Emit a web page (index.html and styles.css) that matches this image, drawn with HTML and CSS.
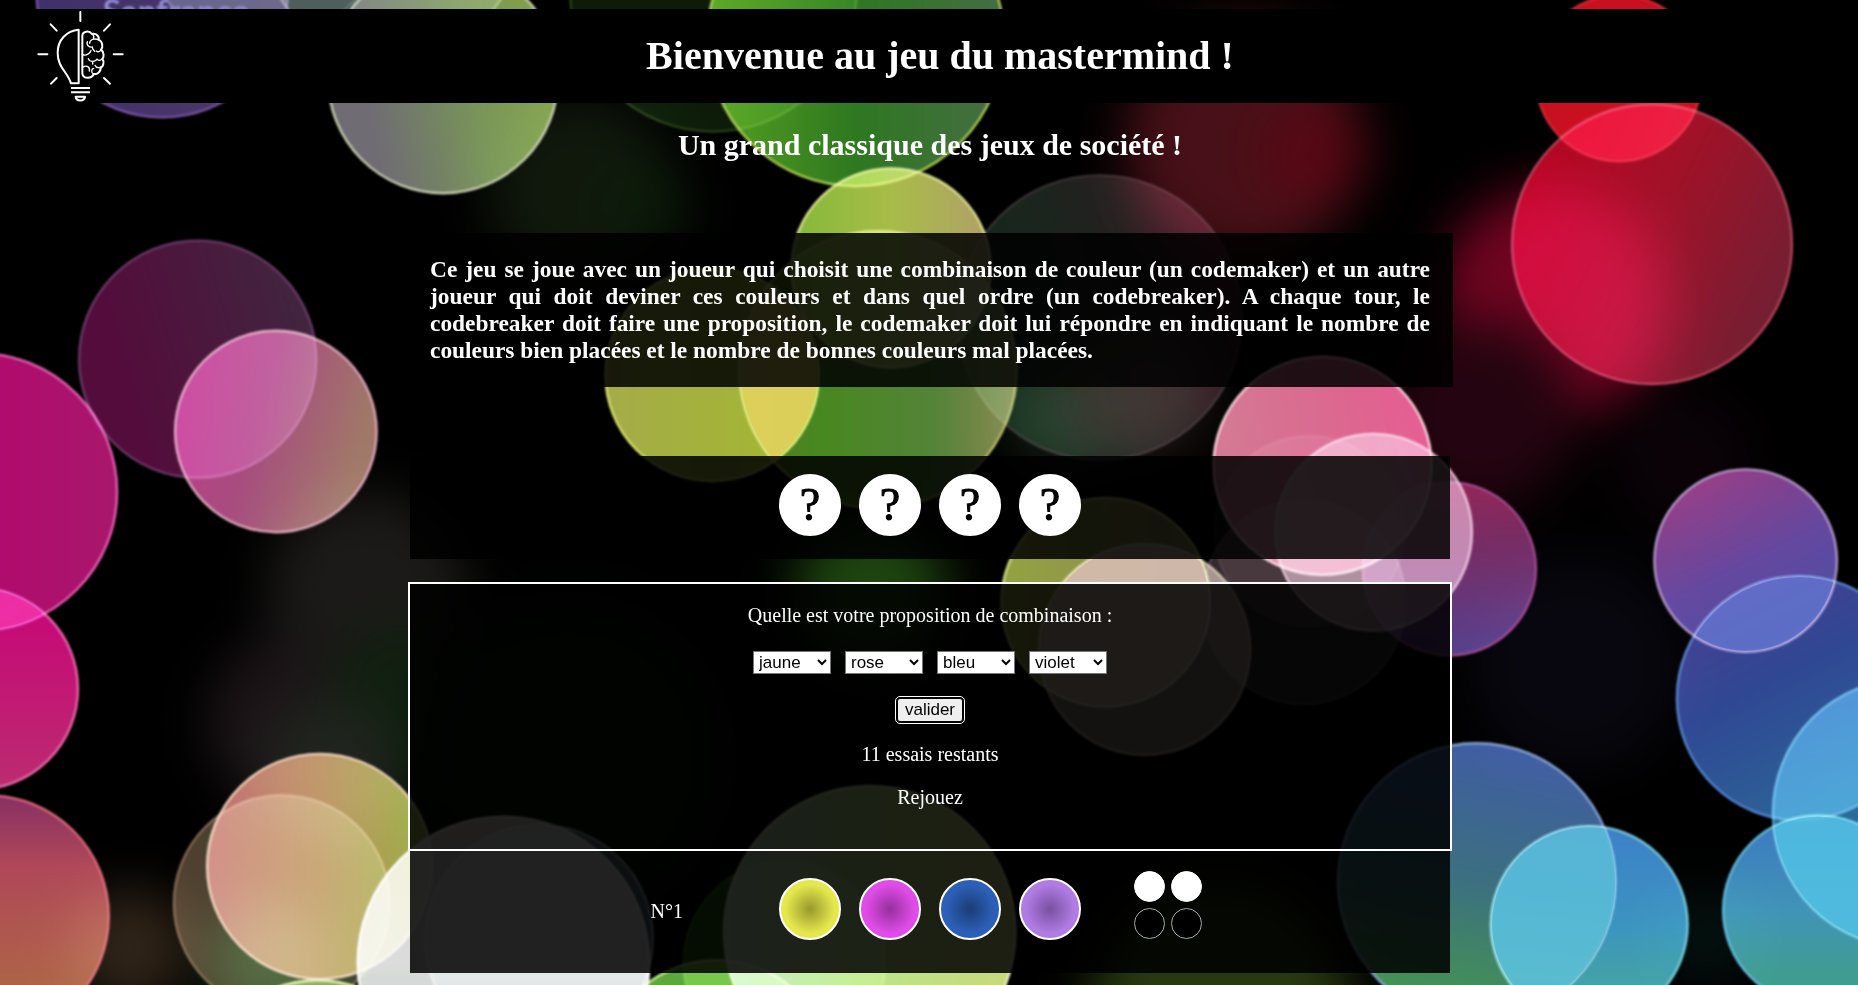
FILE: index.html
```html
<!DOCTYPE html>
<html lang="fr">
<head>
<meta charset="utf-8">
<title>Mastermind</title>
<link rel="stylesheet" href="styles.css">
</head>
<body>
<svg class="bokeh" viewBox="0 0 1568 831" preserveAspectRatio="xMidYMid slice" aria-hidden="true">
  <defs>
    <filter id="soft" x="-50%" y="-50%" width="200%" height="200%" color-interpolation-filters="sRGB"><feGaussianBlur stdDeviation="22"/></filter>
    <linearGradient id="g1" x1="0" x2="1"><stop offset="0" stop-color="#40306c"/><stop offset="1" stop-color="#4c3a66"/></linearGradient>
    <linearGradient id="g2" x1="0" x2="1" y2="-.2"><stop offset=".05" stop-color="#706c74"/><stop offset=".5" stop-color="#789458"/><stop offset=".9" stop-color="#84a348"/></linearGradient>
    <linearGradient id="g3" x1="0" x2="1"><stop offset="0" stop-color="#56a020"/><stop offset=".5" stop-color="#2e7820"/><stop offset="1" stop-color="#466c44"/></linearGradient>
    <linearGradient id="g4" x1="0" x2="1"><stop offset="0" stop-color="#84ba38"/><stop offset=".5" stop-color="#a8bc48"/><stop offset="1" stop-color="#b0a068"/></linearGradient>
    <linearGradient id="g5" x1="0" x2="1" y2="-.3"><stop offset="0" stop-color="#14281c"/><stop offset=".5" stop-color="#242020"/><stop offset="1" stop-color="#4c1028"/></linearGradient>
    <linearGradient id="g6" x1="0" x2="1" y1=".2" y2=".7"><stop offset="0" stop-color="#b80420"/><stop offset=".5" stop-color="#a01228"/><stop offset="1" stop-color="#702034"/></linearGradient>
    <linearGradient id="g8" x1="0" x2="1" y2="-.3"><stop offset="0" stop-color="#540c3c"/><stop offset="1" stop-color="#3c2c40"/></linearGradient>
    <linearGradient id="g9" x1="0" x2="1" y2=".3"><stop offset="0" stop-color="#bc3c88"/><stop offset=".5" stop-color="#a84c80"/><stop offset="1" stop-color="#a07868"/></linearGradient>
    <linearGradient id="g10" x1="0" x2="1"><stop offset=".2" stop-color="#b80070"/><stop offset="1" stop-color="#a8186c"/></linearGradient>
    <linearGradient id="g11" x1="0" x2="0" y2="1"><stop offset="0" stop-color="#c80478"/><stop offset="1" stop-color="#bc2c70"/></linearGradient>
    <linearGradient id="g12" x1="0" x2="0" y2="1"><stop offset="0" stop-color="#883064"/><stop offset=".3" stop-color="#b04858"/><stop offset="1" stop-color="#ac7040"/></linearGradient>
    <linearGradient id="g13" x1="0" x2="1"><stop offset="0" stop-color="#c06c70"/><stop offset=".5" stop-color="#b88858"/><stop offset="1" stop-color="#9cb448"/></linearGradient>
    <linearGradient id="g14" x1="0" x2="1"><stop offset="0" stop-color="#504030"/><stop offset="1" stop-color="#34442c"/></linearGradient>
    <linearGradient id="g15" x1="0" x2="0" y2="1"><stop offset="0" stop-color="#d8d0cc"/><stop offset=".5" stop-color="#dcdcdc"/><stop offset="1" stop-color="#a8cca8"/></linearGradient>
    <linearGradient id="g17" x1="0" x2="1"><stop offset="0" stop-color="#b8e4c0"/><stop offset=".5" stop-color="#bce48c"/><stop offset="1" stop-color="#c8d87c"/></linearGradient>
    <linearGradient id="g19" x1="0" x2="1"><stop offset="0" stop-color="#a4ac48"/><stop offset="1" stop-color="#a4b830"/></linearGradient>
    <linearGradient id="g20" x1="0" x2="1"><stop offset=".1" stop-color="#508020"/><stop offset=".3" stop-color="#488820"/><stop offset=".7" stop-color="#548438"/><stop offset="1" stop-color="#888850"/></linearGradient>
    <linearGradient id="g21" x1="0" x2="1" y2="-.2"><stop offset="0" stop-color="#d47894"/><stop offset="1" stop-color="#e4588c"/></linearGradient>
    <linearGradient id="g23" x1="0" x2="0" y2="1"><stop offset="0" stop-color="#842450"/><stop offset=".5" stop-color="#70306c"/><stop offset="1" stop-color="#54408c"/></linearGradient>
    <linearGradient id="g25" x1="0" x2="1"><stop offset="0" stop-color="#94a440"/><stop offset="1" stop-color="#8c8058"/></linearGradient>
    <linearGradient id="g27" x1=".2" x2=".7" y2="1"><stop offset="0" stop-color="#983c80"/><stop offset=".55" stop-color="#6448a0"/><stop offset="1" stop-color="#4850a0"/></linearGradient>
    <linearGradient id="g28" x1="0" x2=".5" y2="1"><stop offset="0" stop-color="#4c3c90"/><stop offset=".5" stop-color="#304894"/><stop offset="1" stop-color="#2c6498"/></linearGradient>
    <linearGradient id="g29" x1="0" x2="0" y2="1"><stop offset="0" stop-color="#2c64a4"/><stop offset="1" stop-color="#247490"/></linearGradient>
    <linearGradient id="g30" x1="0" x2="0" y2="1"><stop offset="0" stop-color="#3c78c0"/><stop offset=".5" stop-color="#4094b8"/><stop offset="1" stop-color="#40a080"/></linearGradient>
    <linearGradient id="g31" x1=".6" x2=".4" y2="1"><stop offset="0" stop-color="#405ca4"/><stop offset=".5" stop-color="#3c7080"/><stop offset=".9" stop-color="#449058"/></linearGradient>
    <linearGradient id="g32" x1="0" x2="0" y2="1"><stop offset="0" stop-color="#3c80c8"/><stop offset=".5" stop-color="#3c94c0"/><stop offset="1" stop-color="#48ac94"/></linearGradient>
    <clipPath id="c32"><circle cx="1341" cy="780" r="82"/></clipPath>
    <clipPath id="c30"><circle cx="1534" cy="768" r="79"/></clipPath>
    <clipPath id="c28"><circle cx="1518" cy="589" r="102"/></clipPath>
    <clipPath id="c20"><circle cx="741" cy="312" r="116"/></clipPath>
    <clipPath id="c11"><circle cx="-19" cy="581" r="84"/></clipPath>
    <clipPath id="c26"><circle cx="966" cy="548" r="88"/></clipPath>
  </defs>
  <rect width="1568" height="831" fill="#000"/>
  <g filter="url(#soft)">
    <circle cx="1050" cy="120" r="100" fill="#481018"/>
    <circle cx="1110" cy="130" r="44" fill="#580814"/>
    <circle cx="1310" cy="256" r="98" fill="#700420"/>
    <circle cx="1250" cy="350" r="80" fill="#240410"/>
    <circle cx="490" cy="160" r="80" fill="#10180c"/>
    <circle cx="545" cy="175" r="36" fill="#0c1c0a"/>
    <circle cx="735" cy="500" r="64" fill="#1e4410"/>
    <circle cx="310" cy="500" r="85" fill="#1b1a18"/>
    <circle cx="250" cy="610" r="75" fill="#1c1418"/>
    <circle cx="340" cy="600" r="70" fill="#10200f"/>
    <circle cx="280" cy="650" r="60" fill="#20241e"/>
    <circle cx="110" cy="800" r="50" fill="#302418"/>
    <circle cx="230" cy="810" r="50" fill="#183c1c"/>
    <circle cx="480" cy="640" r="130" fill="#041806"/>
    <circle cx="900" cy="350" r="50" fill="#142014"/>
    <circle cx="960" cy="330" r="60" fill="#241818"/>
    <circle cx="1330" cy="560" r="90" fill="#08070f"/>
    <circle cx="1420" cy="390" r="60" fill="#0a0207"/>
    <circle cx="1030" cy="850" r="110" fill="#283810"/>
    <circle cx="1440" cy="790" r="40" fill="#041210"/>
  </g>
  <g class="discs">
    <circle cx="137" cy="-7" r="106" fill="url(#g1)" stroke="#7850a0"/>
    <circle cx="220" cy="-70" r="106" fill="#303c40" stroke="#506070"/>
    <circle cx="374" cy="66" r="97" fill="url(#g2)" stroke="#c4ccb0"/>
    <circle cx="330" cy="-60" r="110" fill="#242c24" stroke="#607058"/>
    <circle cx="602" cy="-10" r="121" fill="#0c1c08" stroke="#284018"/>
    <circle cx="722" cy="32" r="125" fill="url(#g3)" stroke="#a8c850"/>
    <circle cx="752" cy="226" r="84" fill="url(#g4)" stroke="#dce090"/>
    <circle cx="928" cy="268" r="120" fill="url(#g5)" stroke="#383034"/>
    <circle cx="1394" cy="206" r="118" fill="url(#g6)" stroke="#b04458"/>
    <circle cx="1366" cy="66" r="70" fill="#c81020" stroke="#d02830"/>
    <circle cx="167" cy="303" r="100" fill="url(#g8)" stroke="#683864"/>
    <circle cx="233" cy="364" r="85" fill="url(#g9)" stroke="#dca4b8"/>
    <circle cx="-18" cy="415" r="117" fill="url(#g10)" stroke="#e460b0"/>
    <circle cx="-19" cy="581" r="85" fill="url(#g11)" stroke="#e868a8"/>
    <circle cx="-10" cy="773" r="102" fill="url(#g12)" stroke="#dc6878"/>
    <circle cx="270" cy="731" r="95" fill="url(#g13)" stroke="#ecc8b0"/>
    <circle cx="238" cy="762" r="91" fill="url(#g14)" stroke="#806450"/>
    <circle cx="425" cy="812" r="123" fill="url(#g15)" stroke="#fff"/>
    <circle cx="455" cy="792" r="96" fill="#506070" stroke="#b0b0b0"/>
    <circle cx="268" cy="924" r="97" fill="#688048" stroke="#e0e8a0"/>
    <circle cx="662" cy="812" r="85" fill="#285c14" stroke="#3c7020"/>
    <circle cx="605" cy="907" r="97" fill="#5ca83c" stroke="#c0f090"/>
    <circle cx="734" cy="786" r="123" fill="url(#g17)" stroke="#ecf4cc"/>
    <circle cx="601" cy="316" r="90" fill="url(#g19)" stroke="#d8e070"/>
    <circle cx="741" cy="312" r="117" fill="url(#g20)" stroke="#b8b868"/>
    <circle cx="1116" cy="393" r="92" fill="url(#g21)" stroke="#fcd4dc"/>
    <circle cx="1159" cy="449" r="83" fill="#907080" stroke="#dcb4c4"/>
    <circle cx="1105" cy="448" r="80" fill="#181214" stroke="#241c20"/>
    <circle cx="1100" cy="508" r="86" fill="#342a2e" stroke="#4c4044"/>
    <circle cx="1223" cy="480" r="73" fill="url(#g23)" stroke="#a04890"/>
    <circle cx="933" cy="508" r="88" fill="url(#g25)" stroke="#ccd880"/>
    <circle cx="966" cy="548" r="89" fill="#908078" stroke="#c8b8a0"/>
    <circle cx="1473" cy="473" r="77" fill="url(#g27)" stroke="#b094c8"/>
    <circle cx="1518" cy="589" r="103" fill="url(#g28)" stroke="#5484d0"/>
    <circle cx="1609" cy="686" r="113" fill="url(#g29)" stroke="#50a0d0"/>
    <circle cx="1534" cy="768" r="80" fill="url(#g30)" stroke="#60b8dc"/>
    <circle cx="1246" cy="744" r="117" fill="url(#g31)" stroke="#84a0d0"/>
    <circle cx="1341" cy="780" r="83" fill="url(#g32)" stroke="#78c8dc"/>
  </g>
  <circle cx="1246" cy="744" r="117" fill="#50b4d0" opacity=".75" clip-path="url(#c32)"/>
  <circle cx="1609" cy="686" r="112" fill="#4cb8dc" opacity=".8" clip-path="url(#c30)"/>
  <circle cx="1473" cy="473" r="76" fill="#5468c0" opacity=".75" clip-path="url(#c28)"/>
  <circle cx="601" cy="316" r="89" fill="#e0cc5c" opacity=".85" clip-path="url(#c20)"/>
  <circle cx="-18" cy="415" r="116" fill="#ec34a0" opacity=".8" clip-path="url(#c11)"/>
  <circle cx="933" cy="508" r="87" fill="#d0b4a8" opacity=".8" clip-path="url(#c26)"/>
  <text x="87" y="19" class="caption">Sanfranco</text>
</svg>

<header class="banner">
  <svg class="logo" viewBox="39 27 282 282" role="img" aria-label="Mastermind">
    <g fill="none" stroke="#fff" stroke-width="6" stroke-linecap="round" stroke-linejoin="round">
      <path d="M181 36V63M92 73L110 92M270 73L252 92M55 163H82M281 163H308M93 251L110 234M270 251L252 234"/>
      <path d="M176 89C140 92 113 120 113 158C113 204 142 214 153 250H176Z"/>
      <path d="M187 108C187 94 207 90 216 102C230 99 239 111 235 119C248 123 250 141 243 149C253 156 252 172 247 176C255 187 248 202 242 202C243 216 230 224 221 222C214 238 187 237 187 219Z"/>
      <path stroke-width="4" d="M216 102C222 106 223 110 220 115M235 119C222 114 209 119 209 130M202 125C198 136 209 143 217 141C217 149 222 150 224 154M243 149C240 156 233 157 229 153M187 163C196 169 211 162 213 151M247 176C241 183 234 182 231 177M205 176C209 186 220 187 230 179M218 184V192M242 202C234 204 227 201 225 196M189 202C199 194 211 201 208 213M221 222C212 218 214 207 221 205"/>
      <path stroke-linecap="butt" d="M153 264H210M153 277H210"/>
      <path d="M167 290H195C194 305 168 305 167 290Z"/>
    </g>
  </svg>
  <h1 class="title">Bienvenue au jeu du mastermind !</h1>
</header>

<main class="game">
  <h2 class="subtitle">Un grand classique des jeux de société !</h2>
  <section class="intro">
    <h3 class="rules">Ce jeu se joue avec un joueur qui choisit une combinaison de couleur (un codemaker) et un autre joueur qui doit deviner ces couleurs et dans quel ordre (un codebreaker). A chaque tour, le codebreaker doit faire une proposition, le codemaker doit lui répondre en indiquant le nombre de couleurs bien placées et le nombre de bonnes couleurs mal placées.</h3>
  </section>
  <section class="secret pegs">
    <span class="peg hidden">?</span>
    <span class="peg hidden">?</span>
    <span class="peg hidden">?</span>
    <span class="peg hidden">?</span>
  </section>
  <form class="proposal">
    <p class="line">Quelle est votre proposition de combinaison :</p>
    <div class="choices">
      <select class="choice" aria-label="Couleur 1"><option>jaune</option><option>rose</option><option>bleu</option><option>violet</option></select>
      <select class="choice" aria-label="Couleur 2"><option>jaune</option><option selected>rose</option><option>bleu</option><option>violet</option></select>
      <select class="choice" aria-label="Couleur 3"><option>jaune</option><option>rose</option><option selected>bleu</option><option>violet</option></select>
      <select class="choice" aria-label="Couleur 4"><option>jaune</option><option>rose</option><option>bleu</option><option selected>violet</option></select>
    </div>
    <button class="submit" type="button">valider</button>
    <p class="line">11 essais restants</p>
    <p class="line">Rejouez</p>
  </form>
  <section class="attempt">
    <span class="number">N°1</span>
    <div class="pegs">
      <span class="peg yellow"></span>
      <span class="peg pink"></span>
      <span class="peg blue"></span>
      <span class="peg violet"></span>
    </div>
    <div class="hints">
      <span class="hint full"></span><span class="hint full"></span>
      <span class="hint"></span><span class="hint"></span>
    </div>
  </section>
</main>
</body>
</html>
```
FILE: styles.css
```css
* { box-sizing: border-box; }

html { background: #000; }

body {
  margin: 0;
  padding: 9px 8px 12px 10px;
  color: #fff;
  font-family: "Liberation Serif", "Times New Roman", serif;
  font-size: 20px;
  line-height: 23px;
}

.bokeh {
  position: fixed;
  inset: 0;
  z-index: -1;
  width: 100%;
  height: 100%;
}

.discs {
  filter: blur(1px);
  mix-blend-mode: screen;
  stroke-width: 2;
}

.discs circle { mix-blend-mode: screen; }

.caption {
  fill: #9088d0;
  filter: blur(1px);
  font-family: Lato, sans-serif;
  font-size: 28px;
  font-weight: 700;
}

.banner {
  display: grid;
  grid-template-columns: 120px 1fr 100px;
  align-items: center;
  background: #000;
}

.logo {
  display: block;
  width: 94px;
  height: 94px;
  margin-left: 23px;
}

.title {
  margin: 0;
  font-size: 40px;
  line-height: 46px;
  text-align: center;
}

.game {
  display: flex;
  flex-direction: column;
  align-items: center;
}

.subtitle {
  margin: 25px 0 71px;
  font-size: 30px;
  line-height: 34px;
}

.intro,
.secret,
.proposal,
.attempt {
  width: 100%;
  background: rgba(0, 0, 0, 0.86);
}

.intro {
  max-width: 1046px;
  margin-bottom: 69px;
  padding: 23px;
}

.rules {
  margin: 0;
  line-height: 27px;
  text-align: justify;
}

.pegs {
  display: flex;
  justify-content: center;
  gap: 18px;
}

.secret {
  max-width: 1040px;
  margin-bottom: 23px;
  padding: 18px 0 23px;
}

.peg {
  width: 62px;
  height: 62px;
  border: 2px solid #fff;
  border-radius: 50%;
}

.hidden {
  background: #fff;
  color: #000;
  font-size: 46px;
  -webkit-text-stroke: 1px #000;
  line-height: 58px;
  text-align: center;
}

.yellow { background: radial-gradient(circle, #98982c, #e4e84c 60%); }
.pink { background: radial-gradient(circle, #94309c, #e04ce8 60%); }
.blue { background: radial-gradient(circle, #1c3c74, #2c60b8 60%); }
.violet { background: radial-gradient(circle, #7850a0, #b07ce4 60%); }

.proposal {
  display: flex;
  flex-direction: column;
  align-items: center;
  max-width: 1044px;
  padding: 20px 20px 40px;
  border: 2px solid #fff;
}

.line { margin: 0; }

.choices {
  display: flex;
  gap: 14px;
  margin: 24px 0;
}

.choice,
.submit {
  font-family: "Liberation Sans", Arial, sans-serif;
  font-size: 17px;
}

.choice {
  width: 78px;
  height: 23px;
  padding: 0 0 0 1px;
  border: 1px solid #767676;
  border-radius: 0;
  background-color: #fff;
  color: #000;
}

.submit {
  height: 24px;
  padding: 0 7px;
  border: 1px solid #000;
  border-radius: 3px;
  outline: 1px solid #fff;
  outline-offset: 1px;
  background: #efefef;
  color: #000;
  line-height: 20px;
}

.submit + .line { margin: 21px 0 20px; }

.attempt {
  display: grid;
  grid-template-columns: 1fr auto 1fr;
  max-width: 1040px;
  padding: 20px 0 33px;
}

.number {
  justify-self: end;
  margin: 29px 96px 0 0;
}

.attempt .pegs { padding-top: 7px; }

.hints {
  display: grid;
  grid-template-columns: 32px 32px;
  gap: 5px;
  padding-left: 53px;
}

.hint {
  width: 31px;
  height: 31px;
  border: 1px solid #aaa;
  border-radius: 50%;
  background: #000;
}

.full { border-color: #fff; background: #fff; }
```
